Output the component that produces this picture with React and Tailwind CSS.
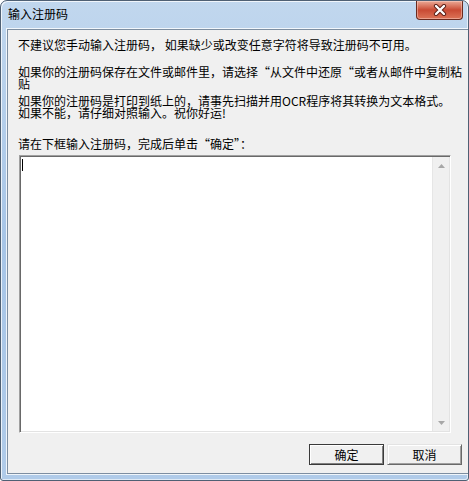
export default function App() {
  const font = "font-['Noto_Sans_CJK_SC','Liberation_Sans',sans-serif]";
  const para2 = "如果你的注册码保存在文件或邮件里，请选择“从文件中还原“或者从邮件中复制粘\n贴";
  const para3 = "如果你的注册码是打印到纸上的，请事先扫描并用OCR程序将其转换为文本格式。\n如果不能，请仔细对照输入。祝你好运!";
  return (
    <div className={`w-[469px] h-[481px] bg-white ${font} text-[12px] text-black`}>
      <div className="w-[469px] h-[481px] flex flex-col rounded-t-[7px] rounded-b-[3px] border border-[#4f6074] bg-gradient-to-b from-[#c1d7ee] via-[#a7c5e7] to-[#b0cbe9] shadow-[inset_1px_1px_0_rgba(255,255,255,0.75),inset_-1px_-1px_0_rgba(255,255,255,0.6)] overflow-hidden">
        {/* Title bar */}
        <div className="h-[28px] shrink-0 flex items-start justify-between">
          <div className="pl-[7px] pt-[6px] leading-[14px] text-[12px] text-black">输入注册码</div>
          <div className="mr-[5px] w-[47px] h-[19px] rounded-b-[4px] border border-t-0 border-[#6b2a1e] bg-gradient-to-b from-[#eaa996] via-[#c94a33] to-[#dc7357] shadow-[inset_0_0_0_1px_rgba(255,220,210,0.45)] flex items-center justify-center">
            <svg width="14" height="12" viewBox="0 0 14 12">
              <path d="M3 2 L11 10 M11 2 L3 10" stroke="#5a1d14" strokeWidth="4.2" strokeLinecap="round" />
              <path d="M3 2 L11 10 M11 2 L3 10" stroke="#ffffff" strokeWidth="2.4" strokeLinecap="round" />
            </svg>
          </div>
        </div>

        {/* Body with side frames */}
        <div className="flex-1 flex px-[6px] pb-[6px]">
          <div className="flex-1 flex flex-col bg-[#f0f0f0] border border-[#7d8ea1] shadow-[0_0_0_1px_rgba(255,255,255,0.8)] px-[10px]">
            <div className="mt-[9px] leading-[12px] whitespace-nowrap">不建议您手动输入注册码，&nbsp;如果缺少或改变任意字符将导致注册码不可用。</div>
            <div className="mt-[15px] leading-[12px] whitespace-pre">{para2}</div>
            <div className="mt-[5px] leading-[12px] whitespace-pre">{para3}</div>
            <div className="mt-[19px] leading-[12px] whitespace-nowrap">请在下框输入注册码，完成后单击“确定”：</div>

            {/* Text box */}
            <div className="mt-[5px] ml-[1px] w-[432px] h-[278px] flex bg-white border border-t-[#a0a0a0] border-l-[#a0a0a0] border-b-white border-r-white shadow-[inset_1px_1px_0_#696969,inset_-1px_-1px_0_#e3e3e3] p-[1px]">
              <div className="relative flex-1">
                <div className="absolute left-[1px] top-[2px] w-[1px] h-[12px] bg-black" />
              </div>
              <div className="w-[17px] flex flex-col bg-[#f0f0f0] border-l border-[#e6e6e6]">
                <div className="h-[17px] flex items-center justify-center">
                  <svg width="7" height="4" viewBox="0 0 7 4">
                    <path d="M0 4 L3.5 0 L7 4 Z" fill="#a7a7a7" />
                  </svg>
                </div>
                <div className="flex-1" />
                <div className="h-[17px] flex items-center justify-center">
                  <svg width="7" height="4" viewBox="0 0 7 4">
                    <path d="M0 0 L3.5 4 L7 0 Z" fill="#a7a7a7" />
                  </svg>
                </div>
              </div>
            </div>

            {/* Buttons */}
            <div className="mt-[11px] flex justify-end gap-[3px]">
              <button className="w-[75px] h-[21px] border border-[#3a3a3a] bg-[#f0f0f0] shadow-[inset_1px_1px_0_#ffffff,inset_-1px_-1px_0_#808080] flex items-center justify-center leading-[12px] text-[12px]">
                确定
              </button>
              <button className="w-[75px] h-[21px] border border-t-[#e3e3e3] border-l-[#e3e3e3] border-b-[#696969] border-r-[#696969] bg-[#f0f0f0] shadow-[inset_1px_1px_0_#ffffff,inset_-1px_-1px_0_#a0a0a0] flex items-center justify-center leading-[12px] text-[12px]">
                取消
              </button>
            </div>
          </div>
        </div>
      </div>
    </div>
  );
}
